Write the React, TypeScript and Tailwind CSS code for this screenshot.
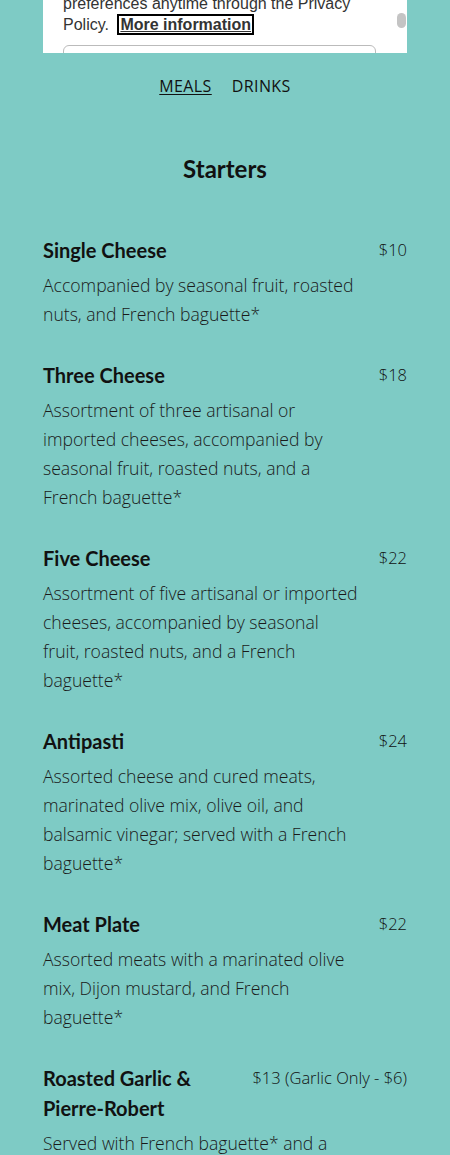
const items = [
  {
    name: "Single Cheese",
    price: "$10",
    desc: "Accompanied by seasonal fruit, roasted nuts, and French baguette*",
  },
  {
    name: "Three Cheese",
    price: "$18",
    desc: "Assortment of three artisanal or imported cheeses, accompanied by seasonal fruit, roasted nuts, and a French baguette*",
  },
  {
    name: "Five Cheese",
    price: "$22",
    desc: "Assortment of five artisanal or imported cheeses, accompanied by seasonal fruit, roasted nuts, and a French baguette*",
  },
  {
    name: "Antipasti",
    price: "$24",
    desc: "Assorted cheese and cured meats, marinated olive mix, olive oil, and balsamic vinegar; served with a French baguette*",
  },
  {
    name: "Meat Plate",
    price: "$22",
    desc: "Assorted meats with a marinated olive mix, Dijon mustard, and French baguette*",
  },
  {
    name: "Roasted Garlic & Pierre-Robert",
    price: "$13 (Garlic Only - $6)",
    desc: "Served with French baguette* and a selection of seasonal accompaniments",
  },
];

const headFont = "font-['Lato','Noto_Sans',sans-serif]";
const bodyFont = "font-['Open_Sans','Noto_Sans',sans-serif]";

function CookiePanel() {
  return (
    <div className="relative mx-[43px] h-[53px] overflow-hidden bg-white">
      <div className="-mt-[7px] pl-[20px] pr-[40px] font-['Liberation_Sans',Arial,sans-serif] text-[16px] leading-[21px] text-[#333]">
        <p>
          preferences anytime through the Privacy Policy.{" "}
          <a className="ml-[4px] border-2 border-black px-[1px] font-bold text-[#333] underline">
            More information
          </a>
        </p>
        <div className="mt-[10px] h-[40px] w-[313px] rounded-md border border-[#bbb]" />
      </div>
      <div className="absolute right-[1px] top-[13px] h-[15px] w-[9px] rounded-full bg-[#c4c4c4]" />
    </div>
  );
}

function MenuItem({ name, price, desc }: { name: string; price: string; desc: string }) {
  return (
    <div>
      <div className="flex items-start justify-between gap-6">
        <h3 className={`${headFont} text-[20px] font-bold leading-[30px] text-[#111]`}>{name}</h3>
        <span className={`${bodyFont} shrink-0 text-[16.5px] font-light leading-[30px] text-[#111]`}>
          {price}
        </span>
      </div>
      <p className={`${bodyFont} mt-[6px] w-[316px] text-[17.6px] font-light leading-[29px] text-[#1a1a1a]`}>
        {desc}
      </p>
    </div>
  );
}

export default function App() {
  return (
    <div className="min-h-[1155px] bg-[#7ecbc5]">
      <CookiePanel />
      <nav className={`${bodyFont} mt-[22px] flex justify-center gap-[20px] text-[16px] leading-[22px] tracking-wide text-[#111]`}>
        <span className="underline underline-offset-2">MEALS</span>
        <span>DRINKS</span>
      </nav>
      <h2 className={`${headFont} mt-[55px] text-center text-[24px] font-bold leading-[34px] text-[#111]`}>
        Starters
      </h2>
      <div className="mt-[49px] flex flex-col gap-[31px] px-[43px]">
        {items.map((it) => (
          <MenuItem key={it.name} {...it} />
        ))}
      </div>
    </div>
  );
}
